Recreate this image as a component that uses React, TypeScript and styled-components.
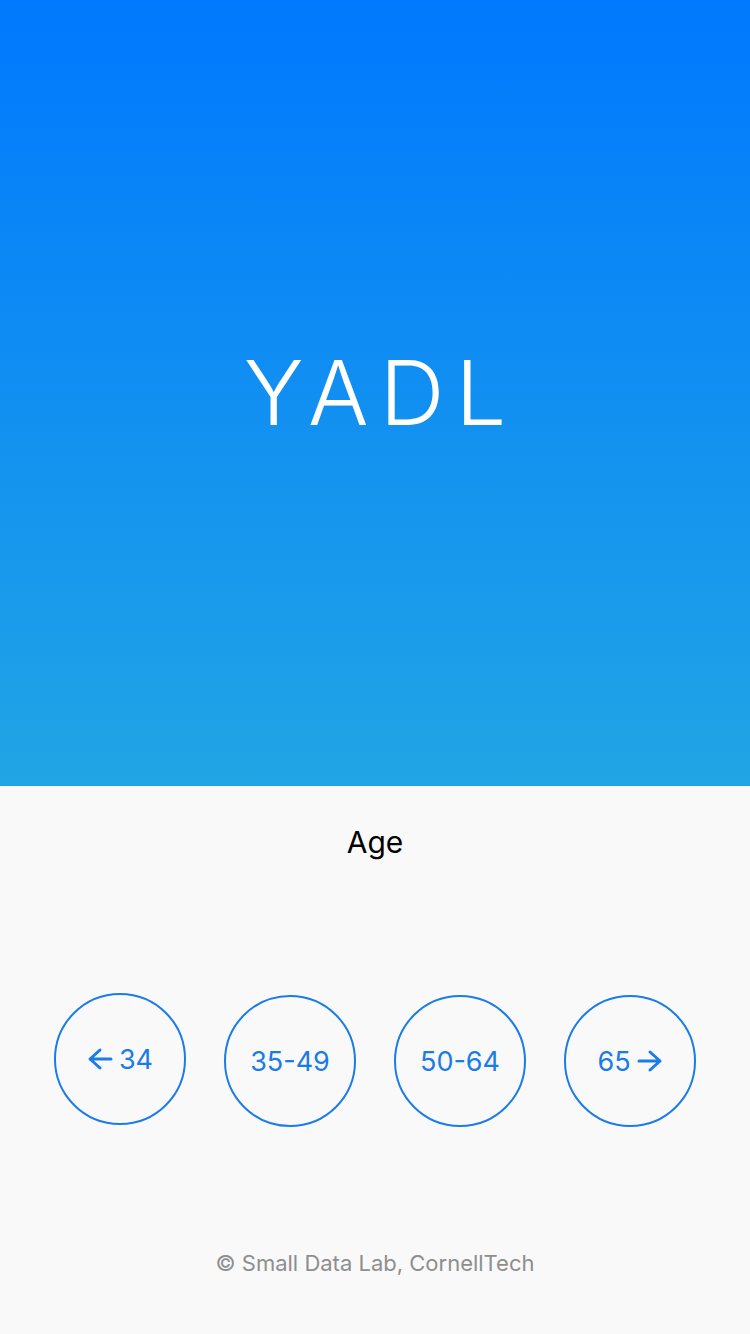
import React from "react";
import styled, { createGlobalStyle } from "styled-components";

const Global = createGlobalStyle`
  html, body { margin: 0; padding: 0; background: #f9f9f9; }
  body { font-family: Inter, "Liberation Sans", sans-serif; }
`;

const Page = styled.div`
  width: 750px;
  height: 1334px;
  display: flex;
  flex-direction: column;
  background: #f9f9f9;
  overflow: hidden;
`;

const Hero = styled.header`
  height: 786px;
  flex: none;
  background: linear-gradient(180deg, #0079fe 0%, #22a5e5 100%);
  display: flex;
  align-items: center;
  justify-content: center;
`;

const Logo = styled.h1`
  margin: 0;
  padding-left: 11px;
  color: #ffffff;
  font-family: Inter, "Liberation Sans", sans-serif;
  font-weight: 300;
  font-size: 90px;
  letter-spacing: 11px;
  line-height: 1;
`;

const Body = styled.main`
  flex: 1;
  display: flex;
  flex-direction: column;
  align-items: center;
`;

const Question = styled.div`
  margin-top: 38px;
  font-size: 30px;
  color: #000;
  line-height: 36px;
`;

const Options = styled.div`
  margin-top: 135px;
  width: 642px;
  display: flex;
  justify-content: space-between;
`;

const Choice = styled.button<{ $dy?: number }>`
  width: 132px;
  height: 132px;
  border-radius: 50%;
  border: 2px solid #1a7ce8;
  background: transparent;
  color: #1a7ce8;
  font-family: Inter, "Liberation Sans", sans-serif;
  font-size: 27px;
  display: flex;
  align-items: center;
  justify-content: center;
  gap: 6px;
  padding: 0;
  margin-top: ${(p) => p.$dy ?? 0}px;
`;

const Footer = styled.footer`
  margin-top: auto;
  margin-bottom: 58px;
  font-size: 22px;
  color: #8e8e8e;
`;

const Arrow = ({ dir }: { dir: "left" | "right" }) => (
  <svg width="26" height="24" viewBox="0 0 26 24" fill="none" stroke="#1a7ce8" strokeWidth="3" strokeLinecap="round" strokeLinejoin="round"
    style={{ transform: dir === "left" ? "scaleX(-1)" : undefined }}>
    <path d="M2 12H23M13 3l10 9-10 9" />
  </svg>
);

export default function App() {
  return (
    <Page>
      <Global />
      <Hero>
        <Logo>YADL</Logo>
      </Hero>
      <Body>
        <Question>Age</Question>
        <Options>
          <Choice $dy={-2}><Arrow dir="left" />34</Choice>
          <Choice>35-49</Choice>
          <Choice>50-64</Choice>
          <Choice>65<Arrow dir="right" /></Choice>
        </Options>
        <Footer>© Small Data Lab, CornellTech</Footer>
      </Body>
    </Page>
  );
}
